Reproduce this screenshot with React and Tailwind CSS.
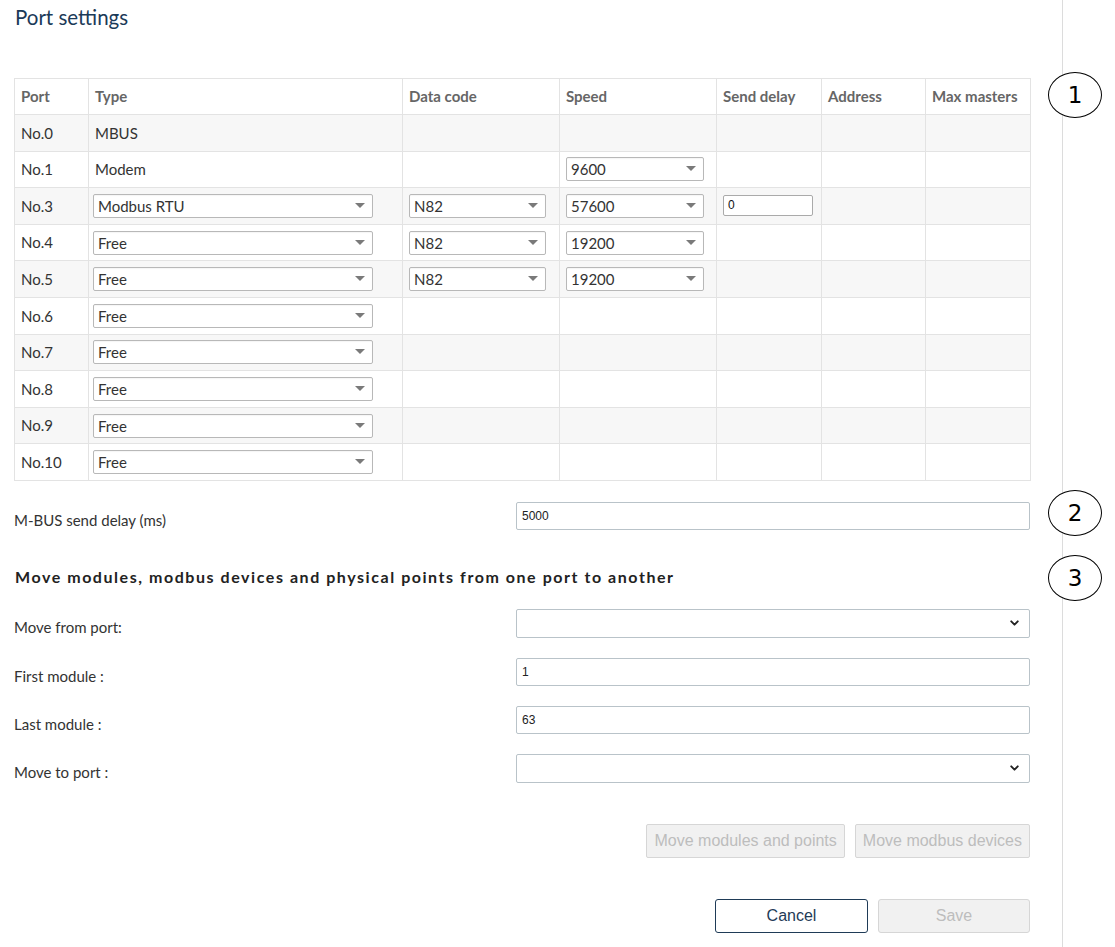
import { ChevronDown } from 'lucide-react'

const rows = [
  { port: 'No.0', type: 'MBUS' },
  { port: 'No.1', type: 'Modem', speed: '9600' },
  { port: 'No.3', typeSel: 'Modbus RTU', code: 'N82', speed: '57600', delay: '0' },
  { port: 'No.4', typeSel: 'Free', code: 'N82', speed: '19200' },
  { port: 'No.5', typeSel: 'Free', code: 'N82', speed: '19200' },
  { port: 'No.6', typeSel: 'Free' },
  { port: 'No.7', typeSel: 'Free' },
  { port: 'No.8', typeSel: 'Free' },
  { port: 'No.9', typeSel: 'Free' },
  { port: 'No.10', typeSel: 'Free' },
]

const font = { fontFamily: 'Lato, "Noto Sans", sans-serif' }

const Caret = () =>
  <svg width="10" height="6" viewBox="0 0 10 6" className="absolute right-[7px] top-1/2 -translate-y-1/2">
    <path d="M0 0 L10 0 L5 5 Z" fill="#7a7a7a" />
  </svg>

const FakeSelect = ({ value, className }) =>
  <div className={`relative h-[24px] border border-[#b8b8b8] rounded-[2px] bg-white pl-[4px] text-[15px] leading-[22px] text-[#333] shadow-[inset_0_1px_1px_rgba(0,0,0,0.04)] ${className}`}>
    {value}
    <Caret />
  </div>

const Annotation = ({ n, top }) =>
  <div className="absolute left-[1048px] w-[54px] h-[46px] rounded-[50%] border-[1.5px] border-black bg-white flex items-center justify-center text-[23px] text-black"
    style={{ top, fontFamily: '"DejaVu Sans", sans-serif' }}>
    {n}
  </div>

const FormRow = ({ label, children, className }) =>
  <div className={`flex items-start ${className}`}>
    <div className="w-[502px] pt-[8px] text-[15px] leading-[20px] text-[#333]">{label}</div>
    <div className="w-[514px]">{children}</div>
  </div>

const TextBox = ({ value }) =>
  <div className="h-[28px] border border-[#b9c3c9] rounded-[2px] px-[5px] text-[12px] leading-[26px] text-[#222]"
    style={{ fontFamily: '"Liberation Sans", Arial, sans-serif' }}>
    {value}
  </div>

const NativeSelect = () =>
  <div className="relative h-[29px] border border-[#b9c3c9] rounded-[2px] bg-white">
    <ChevronDown size={13} strokeWidth={3.5} className="absolute right-[8px] top-1/2 -translate-y-1/2 text-[#222]" />
  </div>

export default function App() {
  return (
    <div className="relative w-[1115px] h-[947px] bg-white overflow-hidden" style={font}>
      <div className="absolute left-[1062px] top-0 h-full w-px bg-[#dcdcdc]" />
      <Annotation n="1" top="72px" />
      <Annotation n="2" top="490px" />
      <Annotation n="3" top="555px" />

      <div className="ml-[14px] w-[1016px]">
        <h1 className="pt-[5px] pl-[1px] text-[20.5px] leading-[24px] text-[#1b3a58]">Port settings</h1>

        <table className="mt-[49px] w-[1016px] table-fixed border-collapse text-[15px] text-[#333]">
          <colgroup>
            <col className="w-[74px]" />
            <col className="w-[314px]" />
            <col className="w-[157px]" />
            <col className="w-[157px]" />
            <col className="w-[105px]" />
            <col className="w-[104px]" />
            <col className="w-[105px]" />
          </colgroup>
          <thead>
            <tr className="h-[36px]">
              {['Port', 'Type', 'Data code', 'Speed', 'Send delay', 'Address', 'Max masters'].map(h =>
                <th key={h} className="border border-[#e3e3e3] px-[6px] text-left font-bold text-[#666]">{h}</th>
              )}
            </tr>
          </thead>
          <tbody>
            {rows.map((r, i) =>
              <tr key={r.port} className={`h-[36.6px] ${i % 2 === 0 ? 'bg-[#f7f7f7]' : 'bg-white'}`}>
                <td className="border border-[#e3e3e3] px-[6px]">{r.port}</td>
                <td className="border border-[#e3e3e3] px-[6px]">
                  {r.typeSel ? <FakeSelect value={r.typeSel} className="w-[280px] -ml-[2px]" /> : r.type}
                </td>
                <td className="border border-[#e3e3e3] px-[6px]">
                  {r.code && <FakeSelect value={r.code} className="w-[137px]" />}
                </td>
                <td className="border border-[#e3e3e3] px-[6px]">
                  {r.speed && <FakeSelect value={r.speed} className="w-[138px]" />}
                </td>
                <td className="border border-[#e3e3e3] px-[6px]">
                  {r.delay &&
                    <div className="w-[90px] h-[21px] border border-[#aaa] rounded-[2px] bg-white pl-[4px] text-[12px] leading-[19px] text-[#111]"
                      style={{ fontFamily: '"Liberation Sans", Arial, sans-serif' }}>{r.delay}</div>}
                </td>
                <td className="border border-[#e3e3e3] px-[6px]"></td>
                <td className="border border-[#e3e3e3] px-[6px]"></td>
              </tr>
            )}
          </tbody>
        </table>

        <FormRow label="M-BUS send delay (ms)" className="mt-[21px]">
          <TextBox value="5000" />
        </FormRow>

        <h2 className="mt-[37px] pl-[1px] text-[16px] leading-[20px] font-bold tracking-[1.55px] text-[#222]">
          Move modules, modbus devices and physical points from one port to another
        </h2>

        <FormRow label="Move from port:" className="mt-[22px]">
          <NativeSelect />
        </FormRow>
        <FormRow label="First module :" className="mt-[20px]">
          <TextBox value="1" />
        </FormRow>
        <FormRow label="Last module :" className="mt-[20px]">
          <TextBox value="63" />
        </FormRow>
        <FormRow label="Move to port :" className="mt-[20px]">
          <NativeSelect />
        </FormRow>

        <div className="mt-[41px] flex justify-end gap-[10px]" style={{ fontFamily: '"Liberation Sans", Arial, sans-serif' }}>
          <button className="h-[34px] px-[7px] border border-[#d6d6d6] rounded-[2px] bg-[#f1f1f1] text-[16px] text-[#bdbdbd]">Move modules and points</button>
          <button className="h-[34px] px-[7px] border border-[#d6d6d6] rounded-[2px] bg-[#f1f1f1] text-[16px] text-[#bdbdbd]">Move modbus devices</button>
        </div>

        <div className="mt-[41px] flex justify-end gap-[10px]" style={{ fontFamily: '"Liberation Sans", Arial, sans-serif' }}>
          <button className="w-[153px] h-[34px] border border-[#1f3b57] rounded-[3px] bg-white text-[16px] text-[#1f3b57]">Cancel</button>
          <button className="w-[152px] h-[34px] border border-[#d6d6d6] rounded-[3px] bg-[#f1f1f1] text-[16px] text-[#bdbdbd]">Save</button>
        </div>
      </div>
    </div>
  )
}
